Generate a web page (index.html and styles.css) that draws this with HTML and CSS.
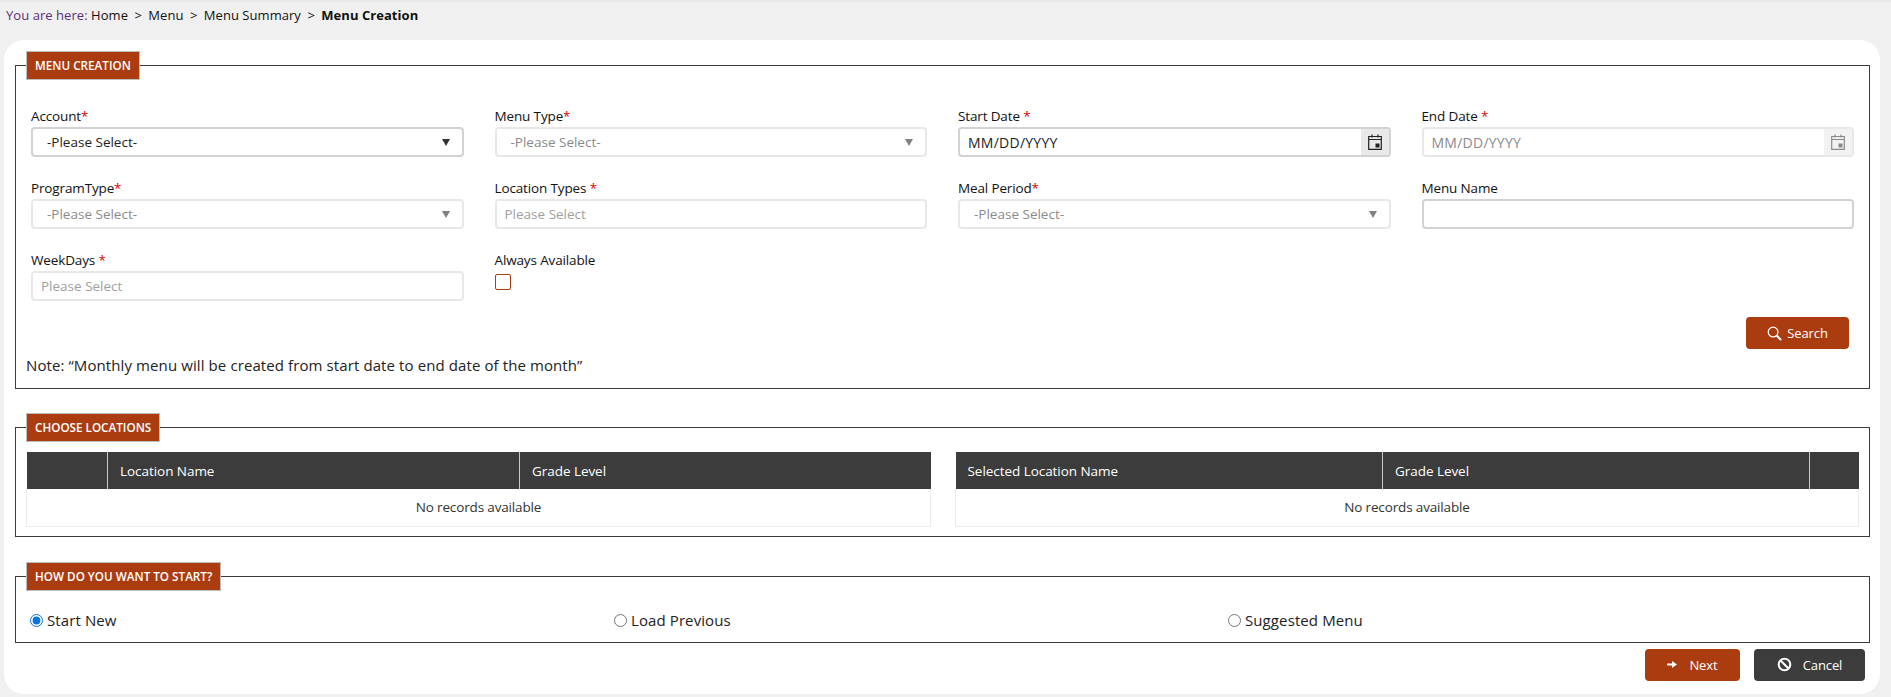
FILE: index.html
```html
<!DOCTYPE html>
<html lang="en">
<head>
<meta charset="utf-8">
<title>Menu Creation</title>
<link rel="stylesheet" href="styles.css">
</head>
<body>
<nav class="crumbs"><span class="crumbs-lead">You are here:</span> Home <i>&gt;</i> Menu <i>&gt;</i> Menu Summary <i>&gt;</i> <b>Menu Creation</b></nav>
<main class="card">
  <fieldset class="section first">
    <legend>Menu Creation</legend>
    <div class="form-grid">
      <div class="field"><label>Account<em>*</em></label><div class="select"><span>-Please Select-</span><svg class="caret" viewBox="0 0 8 7"><path d="M0 0h8L4 7z"/></svg></div></div>
      <div class="field"><label>Menu Type<em>*</em></label><div class="select off"><span>-Please Select-</span><svg class="caret" viewBox="0 0 8 7"><path d="M0 0h8L4 7z"/></svg></div></div>
      <div class="field"><label>Start Date <em>*</em></label><div class="date"><span>MM/DD/YYYY</span><span class="cal"><svg viewBox="0 0 14 16"><path d="M4 .5v3M10 .5v3M.7 2.500h12.600v12.800H.7zM.7 5.500h12.600" fill="none" stroke="currentColor" stroke-width="1.200"/><path d="M7.500 9.500h4v4h-4z" fill="currentColor"/></svg></span></div></div>
      <div class="field"><label>End Date <em>*</em></label><div class="date off"><span>MM/DD/YYYY</span><span class="cal"><svg viewBox="0 0 14 16"><path d="M4 .5v3M10 .5v3M.7 2.500h12.600v12.800H.7zM.7 5.500h12.600" fill="none" stroke="currentColor" stroke-width="1.200"/><path d="M7.500 9.500h4v4h-4z" fill="currentColor"/></svg></span></div></div>
      <div class="field"><label>ProgramType<em>*</em></label><div class="select off"><span>-Please Select-</span><svg class="caret" viewBox="0 0 8 7"><path d="M0 0h8L4 7z"/></svg></div></div>
      <div class="field"><label>Location Types <em>*</em></label><input class="text off" placeholder="Please Select"></div>
      <div class="field"><label>Meal Period<em>*</em></label><div class="select off"><span>-Please Select-</span><svg class="caret" viewBox="0 0 8 7"><path d="M0 0h8L4 7z"/></svg></div></div>
      <div class="field"><label>Menu Name</label><input class="text"></div>
      <div class="field"><label>WeekDays <em>*</em></label><input class="text off" placeholder="Please Select"></div>
      <div class="field"><label>Always Available</label><input class="check" type="checkbox"></div>
    </div>
    <div class="search-row"><button class="btn rust search"><svg viewBox="0 0 16 16"><circle cx="6.500" cy="6.500" r="5.200" fill="none" stroke="currentColor" stroke-width="1.300"/><path d="M10.200 10.200 15 15" stroke="currentColor" stroke-width="2.200"/></svg>Search</button></div>
    <p class="note">Note: “Monthly menu will be created from start date to end date of the month”</p>
  </fieldset>

  <fieldset class="section second">
    <legend>Choose Locations</legend>
    <div class="tables">
      <table class="grid left">
        <thead><tr><th class="c-check"></th><th class="c-name">Location Name</th><th>Grade Level</th></tr></thead>
        <tbody><tr><td colspan="3">No records available</td></tr></tbody>
      </table>
      <table class="grid right">
        <thead><tr><th class="c-sel">Selected Location Name</th><th>Grade Level</th><th class="c-act"></th></tr></thead>
        <tbody><tr><td colspan="3">No records available</td></tr></tbody>
      </table>
    </div>
  </fieldset>

  <fieldset class="section">
    <legend>How do you want to start?</legend>
    <div class="radios">
      <label class="radio r1"><input type="radio" name="start" checked>Start New</label>
      <label class="radio r2"><input type="radio" name="start">Load Previous</label>
      <label class="radio"><input type="radio" name="start">Suggested Menu</label>
    </div>
  </fieldset>

  <div class="actions">
    <button class="btn rust next"><svg viewBox="0 0 12 10"><path d="M0 4h5.500V1L11 5 5.500 9V6H0z" fill="currentColor"/></svg>Next</button>
    <button class="btn dark cancel"><svg viewBox="0 0 16 16"><circle cx="8" cy="8" r="6.200" fill="none" stroke="currentColor" stroke-width="2.200"/><path d="M3.800 3.800l8.400 8.400" stroke="currentColor" stroke-width="2.200"/></svg>Cancel</button>
  </div>
</main>
</body>
</html>
```
FILE: styles.css
```css
* { box-sizing: border-box; }
html, body { margin: 0; height: 697px; overflow: hidden; }
body {
  background: #f0f0f0;
  font-family: "Open Sans", "Noto Sans", sans-serif;
  font-size: 13px;
  color: #111;
}
.crumbs {
  height: 40px;
  padding: 4px 0 0 6px;
  font-size: 13px;
  line-height: 18px;
  letter-spacing: 0.05px;
  border-top: 2px solid #e8e8e8;
}
.crumbs-lead { color: #5c2d77; }
.crumbs i { font-style: normal; margin: 0 3px; }
.crumbs b { font-weight: 700; }
.card {
  width: 1876px;
  height: 654px;
  margin-left: 4px;
  padding: 11px 10px 0 11px;
  background: #fff;
  border-radius: 20px;
}
.section {
  min-width: 0;
  margin: 0 0 23px;
  padding: 0 10px;
  border: 1px solid #3c3c3c;
}
.first { margin-bottom: 24px; }
.second { margin-bottom: 25px; }
.section legend {
  height: 29px;
  padding: 0 8px;
  margin: 0;
  background: #ab3c10;
  border: 1px solid #bdbdbd;
  color: #fff;
  font-size: 11.700px;
  font-weight: 600;
  line-height: 27px;
  text-transform: uppercase;
}
.form-grid {
  display: grid;
  grid-template-columns: repeat(4, 432.500px);
  column-gap: 31px;
  row-gap: 21px;
  padding: 26px 0 0 5px;
}
.field label {
  display: block;
  height: 21px;
  font-size: 13.500px;
  line-height: 20px;
  letter-spacing: -0.14px;
}
.field em { font-style: normal; color: #e00000; }
.select, .date, .text {
  display: flex;
  align-items: center;
  width: 100%;
  height: 30px;
  border: 2px solid #d2d2d2;
  border-radius: 4px;
  background: #fff;
  font-family: inherit;
  font-size: 13.500px;
  color: #222;
}
.select { justify-content: space-between; padding: 0 12px 0 14px; }
.caret { width: 8px; height: 7px; fill: #333; }
.date { padding-left: 8px; justify-content: space-between; }
.date > span:first-child { font-size: 14px; letter-spacing: 0.25px; }
.cal {
  display: flex;
  align-items: center;
  justify-content: center;
  align-self: stretch;
  width: 28px;
  background: #e9e9e9;
  color: #222;
}
.cal svg { width: 14px; height: 16px; }
.text { padding: 0 8px; outline: none; }
.text::placeholder { color: #a0a0a0; opacity: 1; }
.off { border-color: #e8e8e8; color: #8a8a8a; }
.off .caret { fill: #808080; }
.off .cal { background: #f2f2f2; color: #8a8a8a; }
.check {
  appearance: none;
  display: block;
  width: 16px;
  height: 16px;
  margin: 3px 0 0;
  border: 1px solid #ab3c10;
  border-radius: 2px;
  background: #fff;
}
.search-row {
  display: flex;
  justify-content: flex-end;
  padding: 16px 10px 0 0;
}
.btn {
  display: inline-flex;
  align-items: center;
  justify-content: center;
  height: 32px;
  padding: 0;
  border: 0;
  border-radius: 4px;
  color: #fff;
  font-family: inherit;
  font-size: 13px;
  letter-spacing: -0.1px;
}
.rust { background: #ab3c10; }
.dark { background: #3c3c3c; }
.search { width: 103px; }
.search svg { width: 15px; height: 15px; margin-right: 5px; }
.note {
  margin: 6px 0 13px;
  font-size: 15px;
  line-height: 20px;
  letter-spacing: 0.1px;
  color: #222;
}
.tables {
  display: flex;
  justify-content: space-between;
  padding: 10px 0 9px;
}
.grid {
  border-collapse: collapse;
  table-layout: fixed;
}
.grid.left { width: 905px; }
.grid.right { width: 904px; }
.grid th {
  height: 37px;
  padding: 0 12px;
  background: #3c3c3c;
  border-left: 1px solid #c8c8c8;
  color: #fff;
  font-size: 13.500px;
  font-weight: 400;
  text-align: left;
  letter-spacing: -0.05px;
}
.grid th:first-child { border-left: 0; }
.grid td {
  height: 37px;
  border: 1px solid #ececec;
  border-top: 0;
  text-align: center;
  font-size: 13.500px;
  letter-spacing: -0.15px;
  color: #333;
}
.c-check { width: 81px; }
.c-name { width: 412px; }
.c-sel { width: 427px; }
.c-act { width: 49px; }
.radios {
  display: flex;
  align-items: center;
  height: 51px;
  padding: 8px 0 0 4px;
}
.radio {
  display: flex;
  align-items: center;
  font-size: 15px;
  letter-spacing: 0.1px;
  color: #222;
}
.radio input { width: 13px; height: 13px; margin: 0 4px 0 0; accent-color: #0b74de; }
.r1 { width: 584px; }
.r2 { width: 614px; }
.actions {
  display: flex;
  justify-content: flex-end;
  gap: 14px;
  margin-top: -17px;
  padding-right: 5px;
}
.next { width: 95px; }
.next svg { width: 11px; height: 9px; margin-right: 11px; }
.cancel { width: 111px; }
.cancel svg { width: 15px; height: 15px; margin-right: 11px; }
```
